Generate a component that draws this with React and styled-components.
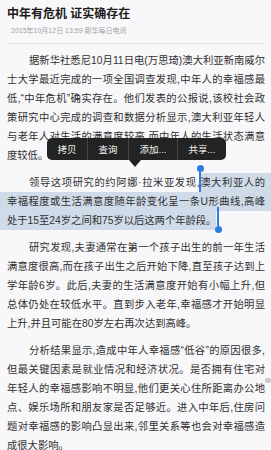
import React from 'react'
import styled, { createGlobalStyle } from 'styled-components'

const GlobalStyle = createGlobalStyle`
  html, body {
    margin: 0;
    padding: 0;
    background: #f8f7f9;
  }
  body {
    font-family: "Liberation Sans", "Noto Sans CJK SC", sans-serif;
    -webkit-font-smoothing: antialiased;
  }
`

const Page = styled.div`
  position: relative;
  height: 450px;
  overflow: hidden;
  padding: 6px 6px 0 7px;
  box-sizing: border-box;
`

const Title = styled.h1`
  margin: 0;
  font-size: 12px;
  line-height: 16px;
  font-weight: 700;
  color: #1b1b1b;
`

const Meta = styled.div`
  margin: 4px 0 0 4px;
  font-size: 7px;
  line-height: 10px;
  color: #a3a3a6;
`

const Rule = styled.div`
  height: 1px;
  margin: 7px 1px 7px 0;
  background: #e3e2e6;
`

const Article = styled.div`
  display: flex;
  flex-direction: column;
  gap: 8px;
`

const Paragraph = styled.div`
  font-size: 10.3px;
  line-height: 19px;
  color: #303030;
`

const Line = styled.div`
  text-align: justify;
  text-align-last: ${p => (p.$last ? 'left' : 'justify')};
  text-indent: ${p => (p.$indent ? '22px' : '0')};
`

const Mark = styled.span`
  background: #cfdbe9;
  padding: 3.75px ${p => (p.$right ? '6px' : '0')} 3.75px ${p => (p.$left ? '7px' : '0')};
  margin-left: ${p => (p.$left ? '-7px' : '0')};
  margin-right: ${p => (p.$right ? '-6px' : '0')};
`

const Handle = styled.div`
  position: absolute;
  top: ${p => p.$top}px;
  left: ${p => p.$left}px;
  width: 7px;
  display: flex;
  flex-direction: ${p => (p.$end ? 'column-reverse' : 'column')};
  align-items: center;
`

const Knob = styled.div`
  width: 7px;
  height: 7px;
  border-radius: 50%;
  background: #2f7de0;
`

const Stem = styled.div`
  width: 1.5px;
  height: ${p => p.$h}px;
  background: #2f7de0;
`

const Menu = styled.div`
  position: absolute;
  top: 138px;
  left: 47px;
  height: 22px;
  display: flex;
  align-items: stretch;
  background: #232323;
  border-radius: 5px;

  &::after {
    content: '';
    position: absolute;
    top: 100%;
    left: 81.5px;
    border-left: 6.5px solid transparent;
    border-right: 6.5px solid transparent;
    border-top: 7px solid #232323;
  }
`

const MenuItem = styled.div`
  display: flex;
  align-items: center;
  padding: 0 10.5px;
  font-size: 9.5px;
  color: #f2f2f2;
  & + & {
    border-left: 1px solid #464646;
  }
`

const ScrollThumb = styled.div`
  position: absolute;
  right: 0;
  top: 378px;
  width: 6px;
  height: 5px;
  border-radius: 2px;
  background: #c9c9cc;
`

const paragraphs = [
  [
    '据新华社悉尼10月11日电(万思琦)澳大利亚新南威尔',
    '士大学最近完成的一项全国调查发现,中年人的幸福感最',
    '低,“中年危机”确实存在。他们发表的公报说,该校社会政',
    '策研究中心完成的调查和数据分析显示,澳大利亚年轻人',
    '与老年人对生活的满意度较高,而中年人的生活状态满意',
    '度较低。',
  ],
  [
    { pre: '领导这项研究的约阿娜·拉米亚发现,', mark: '澳大利亚人的', right: true },
    { mark: '幸福程度或生活满意度随年龄变化呈一条U形曲线,高峰', left: true, right: true },
    { mark: '处于15至24岁之间和75岁以后这两个年龄段。', left: true },
  ],
  [
    '研究发现,夫妻通常在第一个孩子出生的前一年生活',
    '满意度很高,而在孩子出生之后开始下降,直至孩子达到上',
    '学年龄6岁。此后,夫妻的生活满意度开始有小幅上升,但',
    '总体仍处在较低水平。直到步入老年,幸福感才开始明显',
    '上升,并且可能在80岁左右再次达到高峰。',
  ],
  [
    '分析结果显示,造成中年人幸福感“低谷”的原因很多,',
    '但最关键因素是就业情况和经济状况。是否拥有住宅对',
    '年轻人的幸福感影响不明显,他们更关心住所距离办公地',
    '点、娱乐场所和朋友家是否足够近。进入中年后,住房问',
    '题对幸福感的影响凸显出来,邻里关系等也会对幸福感造',
    '成很大影响。',
  ],
]

const menu = ['拷贝', '查询', '添加...', '共享...']

const renderLine = line => {
  if (typeof line === 'string') return line
  return (
    <>
      {line.pre}
      <Mark $left={line.left} $right={line.right}>{line.mark}</Mark>
    </>
  )
}

const App = () => {
  return (
    <Page>
      <GlobalStyle />
      <Title>中年有危机 证实确存在</Title>
      <Meta>2015年10月12日 13:59 新华每日电讯</Meta>
      <Rule />
      <Article>
        {paragraphs.map((lines, i) => (
          <Paragraph key={i}>
            {lines.map((line, j) => (
              <Line key={j} $indent={j === 0} $last={j === lines.length - 1}>
                {renderLine(line)}
              </Line>
            ))}
          </Paragraph>
        ))}
      </Article>

      <Handle $top={165} $left={196.5}>
        <Knob />
        <Stem $h={20} />
      </Handle>
      <Handle $top={207} $left={214.5} $end>
        <Knob />
        <Stem $h={19} />
      </Handle>

      <Menu>
        {menu.map(item => (
          <MenuItem key={item}>{item}</MenuItem>
        ))}
      </Menu>
      <ScrollThumb />
    </Page>
  )
}

export default App
